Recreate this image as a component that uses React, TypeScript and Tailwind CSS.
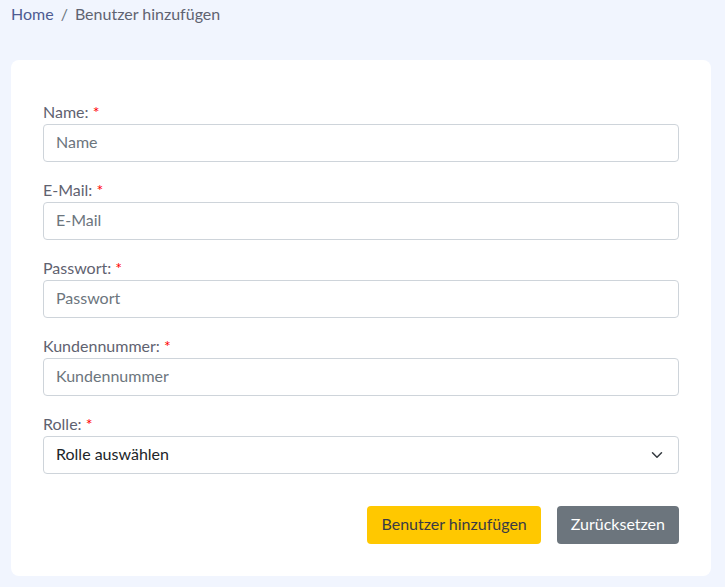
export default function App() {
  const fields = [
    { label: "Name:", placeholder: "Name", type: "text" },
    { label: "E-Mail:", placeholder: "E-Mail", type: "email" },
    { label: "Passwort:", placeholder: "Passwort", type: "password" },
    { label: "Kundennummer:", placeholder: "Kundennummer", type: "text" },
  ];

  return (
    <div
      className="min-h-[587px] bg-[#f1f5fe] pl-[11px] pr-[14px] pt-[3px] pb-[12px] text-[#5a5c69]"
      style={{ fontFamily: "Lato, 'Noto Sans', sans-serif" }}
    >
      {/* Breadcrumb */}
      <nav className="flex items-center gap-[7px] text-[16px] leading-[22px]">
        <a className="text-[#4e5b92]">Home</a>
        <span className="text-[#6c757d]">/</span>
        <span className="text-[#5f6371]">Benutzer hinzufügen</span>
      </nav>

      {/* Card */}
      <div className="mt-[35px] rounded-[8px] bg-white px-[32px] pt-[40px] pb-[32px]">
        {fields.map((f) => (
          <div key={f.label} className="mb-[16px]">
            <label className="block text-[16px] leading-[24px] text-[#5f6270]">
              {f.label} <span className="text-[#ff0000]">*</span>
            </label>
            <input
              type={f.type}
              placeholder={f.placeholder}
              className="block h-[38px] w-full rounded-[4px] border border-[#ced4da] px-[12px] pb-[3px] text-[16px] text-[#212529] placeholder:text-[#6c757d] outline-none"
            />
          </div>
        ))}

        <div className="mb-[16px]">
          <label className="block text-[16px] leading-[24px] text-[#5f6270]">
            Rolle: <span className="text-[#ff0000]">*</span>
          </label>
          <div className="relative">
            <select className="block h-[38px] w-full appearance-none rounded-[4px] border border-[#ced4da] bg-white px-[12px] pb-[2px] text-[16px] text-[#212529] outline-none">
              <option>Rolle auswählen</option>
              <option>Admin</option>
              <option>Benutzer</option>
            </select>
            <svg
              className="pointer-events-none absolute right-[16px] top-1/2 -translate-y-1/2"
              width="12"
              height="12"
              viewBox="0 0 16 16"
              fill="none"
              stroke="#343a40"
              strokeWidth="2"
              strokeLinecap="round"
              strokeLinejoin="round"
            >
              <path d="M2 5l6 6 6-6" />
            </svg>
          </div>
        </div>

        <div className="mt-[32px] flex justify-end gap-[16px]">
          <button className="h-[38px] rounded-[4px] bg-[#ffc800] px-[14px] pb-[2px] text-[16px] text-[#3a3b45]">
            Benutzer hinzufügen
          </button>
          <button className="h-[38px] rounded-[4px] bg-[#6c757d] px-[14px] pb-[2px] text-[16px] text-white">
            Zurücksetzen
          </button>
        </div>
      </div>
    </div>
  );
}
